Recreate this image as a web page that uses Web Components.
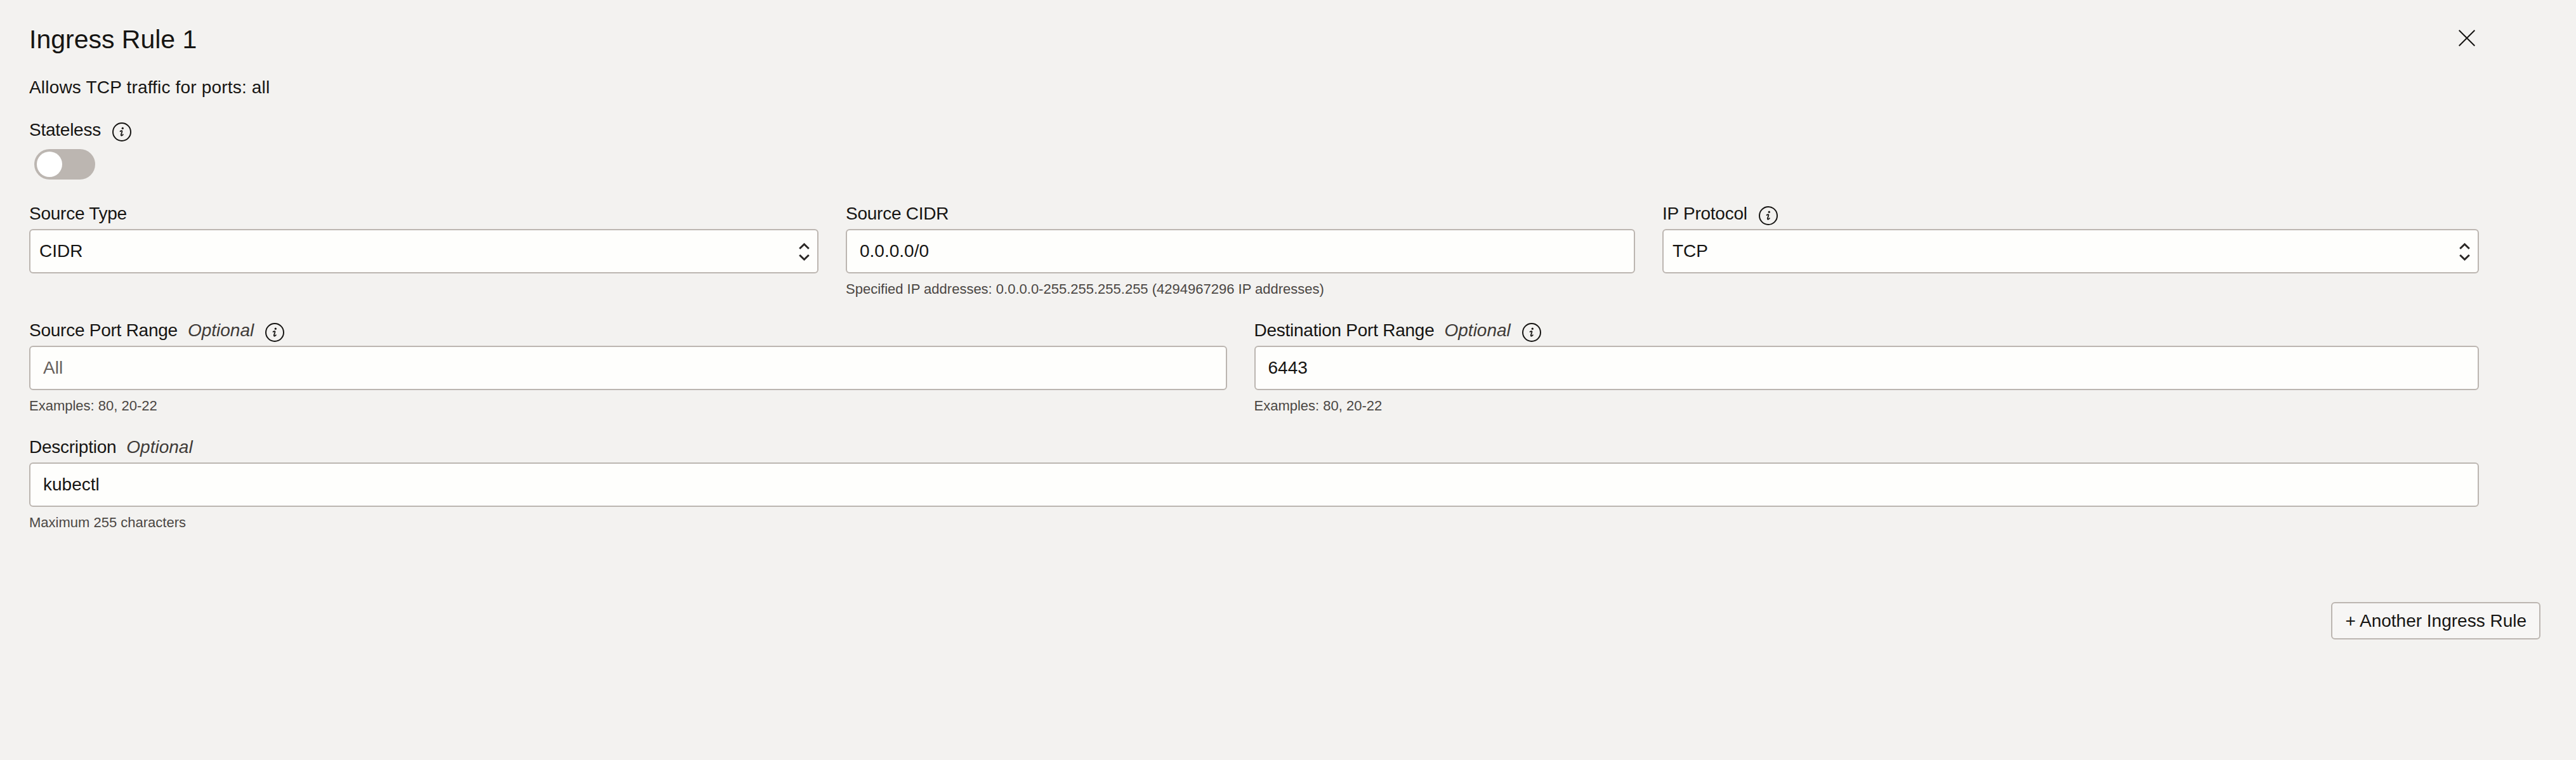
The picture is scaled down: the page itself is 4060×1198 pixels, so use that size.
<!DOCTYPE html>
<html>
<head>
<meta charset="utf-8">
<title>Ingress Rule</title>
<style>
    html, body {
        margin: 0;
        padding: 0;
        background: #f3f2f0;
    }
    body {
        font-family: "Liberation Sans", Arial, sans-serif;
        color: #161513;
    }
</style>
</head>
<body>
<ingress-rule>
    <span slot="title">Ingress Rule 1</span>
    <span slot="summary">Allows TCP traffic for ports: all</span>

    <form-field slot="stateless" label="Stateless" info>
        <toggle-switch></toggle-switch>
    </form-field>

    <form-row slot="rows">
        <form-field label="Source Type"><select-box>CIDR</select-box></form-field>
        <form-field label="Source CIDR" helper="Specified IP addresses: 0.0.0.0-255.255.255.255 (4294967296 IP addresses)"><text-box>0.0.0.0/0</text-box></form-field>
        <form-field label="IP Protocol" info><select-box>TCP</select-box></form-field>
    </form-row>
    <form-row slot="rows">
        <form-field label="Source Port Range" optional info helper="Examples: 80, 20-22"><text-box placeholder>All</text-box></form-field>
        <form-field label="Destination Port Range" optional info helper="Examples: 80, 20-22"><text-box>6443</text-box></form-field>
    </form-row>
    <form-row slot="rows">
        <form-field label="Description" optional helper="Maximum 255 characters"><text-box>kubectl</text-box></form-field>
    </form-row>

    <plain-button slot="action">+ Another Ingress Rule</plain-button>
</ingress-rule>

<script>
class IngressRule extends HTMLElement {
    constructor() {
        super()
        this.attachShadow({ mode: 'open' })

        const template = document.createElement('template')
        template.innerHTML = `
            <style>
                :host {
                    display: block;
                    box-sizing: border-box;
                    height: 1198px;
                    padding: 38px 56px 0 46px;
                }
                .form {
                    margin-right: 97px;
                }
                .header {
                    display: flex;
                    justify-content: space-between;
                    align-items: flex-start;
                    height: 48px;
                }
                h2 {
                    margin: 0;
                    font-size: 41px;
                    line-height: 48px;
                    font-weight: 400;
                }
                .close {
                    width: 26px;
                    height: 26px;
                    margin: 9px 6px 0 0;
                }
                p {
                    margin: 35px 0 32px;
                    font-size: 28px;
                    line-height: 34px;
                    letter-spacing: 0.18px;
                }
                .rows {
                    display: flex;
                    flex-direction: column;
                    gap: 33px;
                    margin-top: 36px;
                }
                .actions {
                    display: flex;
                    justify-content: flex-end;
                    margin-top: 111px;
                }
            </style>
            <div class="form">
                <div class="header">
                    <h2><slot name="title"></slot></h2>
                    <svg class="close" viewBox="0 0 26 26" fill="none" stroke="#161513" stroke-width="2">
                        <path d="M0.7 0.7 L25.3 25.3 M25.3 0.7 L0.7 25.3"/>
                    </svg>
                </div>
                <p><slot name="summary"></slot></p>
                <slot name="stateless"></slot>
                <div class="rows"><slot name="rows"></slot></div>
            </div>
            <div class="actions"><slot name="action"></slot></div>
        `
        this.shadowRoot.appendChild(template.content.cloneNode(true))
    }
}

class FormRow extends HTMLElement {
    constructor() {
        super()
        this.attachShadow({ mode: 'open' })

        const template = document.createElement('template')
        template.innerHTML = `
            <style>
                :host {
                    display: grid;
                    grid-auto-flow: column;
                    grid-auto-columns: 1fr;
                }
                ::slotted(form-field) {
                    min-width: 0;
                    padding-right: 43px;
                }
                ::slotted(form-field:last-child) {
                    padding-right: 0;
                }
            </style>
            <slot></slot>
        `
        this.shadowRoot.appendChild(template.content.cloneNode(true))
    }
}

class FormField extends HTMLElement {
    constructor() {
        super()
        this.attachShadow({ mode: 'open' })

        const template = document.createElement('template')
        template.innerHTML = `
            <style>
                :host {
                    display: block;
                    box-sizing: border-box;
                }
                .label {
                    display: flex;
                    align-items: flex-start;
                    height: 34px;
                    margin-bottom: 8px;
                    font-size: 28px;
                    line-height: 36px;
                }
                #text {
                    letter-spacing: -0.25px;
                }
                .optional {
                    margin-left: 16px;
                    font-style: italic;
                    color: #3f3b38;
                }
                info-icon {
                    margin: 6px 0 0 18px;
                }
                .helper {
                    margin-top: 10px;
                    margin-bottom: -1px;
                    font-size: 22px;
                    line-height: 30px;
                    color: #4b4744;
                }
            </style>
            <div class="label"><span id="text"></span></div>
            <slot></slot>
        `
        this.shadowRoot.appendChild(template.content.cloneNode(true))
        const label = this.shadowRoot.querySelector('.label')
        this.shadowRoot.getElementById('text').textContent = this.getAttribute('label')
        if (this.hasAttribute('optional')) {
            const optional = document.createElement('span')
            optional.className = 'optional'
            optional.textContent = 'Optional'
            label.appendChild(optional)
        }
        if (this.hasAttribute('info'))
            label.appendChild(document.createElement('info-icon'))
        if (this.hasAttribute('helper')) {
            const helper = document.createElement('div')
            helper.className = 'helper'
            helper.textContent = this.getAttribute('helper')
            this.shadowRoot.appendChild(helper)
        }
    }
}

class InfoIcon extends HTMLElement {
    constructor() {
        super()
        this.attachShadow({ mode: 'open' })

        const template = document.createElement('template')
        template.innerHTML = `
            <style>
                :host {
                    display: inline-block;
                    width: 30px;
                    height: 30px;
                }
                svg {
                    display: block;
                }
            </style>
            <svg width="30" height="30" viewBox="0 0 30 30" fill="none">
                <circle cx="15" cy="15" r="14" stroke="#161513" stroke-width="2"/>
                <circle cx="16.3" cy="9.2" r="1.6" fill="#161513"/>
                <path d="M12.6 14 C13.6 13 15 12.7 15.4 13.5 C15.7 14.1 14.6 17 14 18.8 C13.6 20.2 13.8 20.9 14.6 20.8 C15.4 20.7 16.2 20 16.9 19.2" stroke="#161513" stroke-width="1.8" stroke-linecap="round"/>
            </svg>
        `
        this.shadowRoot.appendChild(template.content.cloneNode(true))
    }
}

class ToggleSwitch extends HTMLElement {
    constructor() {
        super()
        this.attachShadow({ mode: 'open' })

        const template = document.createElement('template')
        template.innerHTML = `
            <style>
                :host {
                    display: flex;
                    align-items: center;
                    box-sizing: border-box;
                    width: 96px;
                    height: 48px;
                    margin: 14px 0 0 8px;
                    padding-left: 4px;
                    border-radius: 24px;
                    background: #bcb6b1;
                }
                .knob {
                    width: 40px;
                    height: 40px;
                    border-radius: 50%;
                    background: #fff;
                }
            </style>
            <div class="knob"></div>
        `
        this.shadowRoot.appendChild(template.content.cloneNode(true))
    }
}

class TextBox extends HTMLElement {
    constructor() {
        super()
        this.attachShadow({ mode: 'open' })

        const template = document.createElement('template')
        template.innerHTML = `
            <style>
                :host {
                    display: flex;
                    align-items: center;
                    box-sizing: border-box;
                    height: 70px;
                    padding: 0 20px;
                    border: 2px solid #bcb6b1;
                    border-radius: 6px;
                    background: #fefefc;
                    font-size: 28px;
                }
                :host([placeholder]) {
                    color: #66605c;
                }
            </style>
            <slot></slot>
        `
        this.shadowRoot.appendChild(template.content.cloneNode(true))
    }
}

class SelectBox extends HTMLElement {
    constructor() {
        super()
        this.attachShadow({ mode: 'open' })

        const template = document.createElement('template')
        template.innerHTML = `
            <style>
                :host {
                    display: flex;
                    align-items: center;
                    justify-content: space-between;
                    box-sizing: border-box;
                    height: 70px;
                    padding: 0 12px 0 14px;
                    border: 2px solid #bcb6b1;
                    border-radius: 6px;
                    background: #fefefc;
                    font-size: 28px;
                }
                svg {
                    display: block;
                    margin-top: 2px;
                    filter: blur(0.5px);
                }
            </style>
            <slot></slot>
            <svg width="17" height="28" viewBox="0 0 17 28" fill="none" stroke="#2a2725" stroke-width="3">
                <path d="M1.2 9 L8.5 2 L15.8 9 M1.2 19 L8.5 26 L15.8 19"/>
            </svg>
        `
        this.shadowRoot.appendChild(template.content.cloneNode(true))
    }
}

class PlainButton extends HTMLElement {
    constructor() {
        super()
        this.attachShadow({ mode: 'open' })

        const template = document.createElement('template')
        template.innerHTML = `
            <style>
                :host {
                    display: flex;
                    align-items: center;
                    box-sizing: border-box;
                    height: 59px;
                    padding: 0 20px;
                    border: 2px solid #bcb6b1;
                    border-radius: 6px;
                    background: #f7f6f5;
                    font-size: 28px;
                }
            </style>
            <slot></slot>
        `
        this.shadowRoot.appendChild(template.content.cloneNode(true))
    }
}

customElements.define('ingress-rule', IngressRule)
customElements.define('form-row', FormRow)
customElements.define('form-field', FormField)
customElements.define('info-icon', InfoIcon)
customElements.define('toggle-switch', ToggleSwitch)
customElements.define('text-box', TextBox)
customElements.define('select-box', SelectBox)
customElements.define('plain-button', PlainButton)
</script>
</body>
</html>
